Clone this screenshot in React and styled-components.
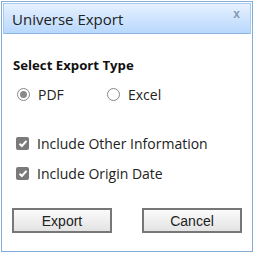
import React from "react"
import styled, { createGlobalStyle } from "styled-components"

const Global = createGlobalStyle`
	html, body {
		margin: 0;
		padding: 0;
		background: #ffffff;
	}
	body {
		font-family: "Open Sans", "Noto Sans", sans-serif;
	}
`

const Page = styled.div`
	width: 254px;
	height: 254px;
	padding: 1px;
	box-sizing: border-box;
`

const Dialog = styled.div`
	width: 252px;
	height: 251px;
	box-sizing: border-box;
	border: 1px solid #85acd6;
	padding: 1px;
	display: flex;
	flex-direction: column;
	background: #fff;
`

const Header = styled.div`
	height: 31px;
	box-sizing: border-box;
	border: 1px solid #a9cbef;
	border-bottom-color: #8db6e3;
	background: linear-gradient(#e6f1ff, #b8d8fd);
	display: flex;
	align-items: center;
	justify-content: space-between;
	padding: 0 10px 0 8px;
`

const Title = styled.span`
	font-size: 15px;
	color: #222;
	margin-top: 1px;
`

const Close = styled.span`
	font-family: "Liberation Sans", Arial, sans-serif;
	font-weight: bold;
	font-size: 12px;
	color: #8799ae;
	margin-top: -9px;
`

const Body = styled.div`
	padding: 22px 10px 0 10px;
	display: flex;
	flex-direction: column;
`

const Heading = styled.div`
	font-size: 13.2px;
	font-weight: bold;
	color: #111;
	line-height: 18px;
`

const RadioRow = styled.div`
	display: flex;
	margin-top: 10px;
	height: 20px;
	align-items: center;
`

const Option = styled.label`
	display: flex;
	align-items: center;
	width: ${p => p.w}px;
	font-size: 14px;
	color: #222;
`

const Radio = styled.span`
	width: 11px;
	height: 11px;
	border-radius: 50%;
	border: 1px solid #888;
	background: #fff;
	margin: 0 8px 0 4px;
	display: flex;
	align-items: center;
	justify-content: center;
	&::after {
		content: "";
		width: 7px;
		height: 7px;
		border-radius: 50%;
		background: ${p => (p.checked ? "#8a8a8a" : "transparent")};
	}
`

const Checks = styled.div`
	margin-top: 29px;
	display: flex;
	flex-direction: column;
	gap: 10px;
`

const CheckRow = styled.label`
	display: flex;
	align-items: center;
	height: 20px;
	font-size: 14px;
	color: #222;
`

const Box = styled.span`
	width: 13px;
	height: 13px;
	border-radius: 2px;
	background: #7a7a7a;
	margin: 0 8px 0 3px;
	display: flex;
	align-items: center;
	justify-content: center;
`

const Buttons = styled.div`
	display: flex;
	justify-content: space-between;
	margin: 25px 0 0 -1px;
	width: 230px;
`

const Button = styled.button`
	width: 100px;
	height: 25px;
	box-sizing: border-box;
	border: 2px solid #777;
	background: linear-gradient(#fbfbfb, #e3e3e3);
	font-family: "Liberation Sans", Arial, sans-serif;
	font-size: 14px;
	color: #222;
	padding: 0;
`

const Check = () => (
	<svg width="10" height="9" viewBox="0 0 10 9">
		<path d="M1.5 4.8 L3.9 7 L8.5 1.8" fill="none" stroke="#fff" strokeWidth="2" />
	</svg>
)

export default function App() {
	return (
		<Page>
			<Global />
			<Dialog>
				<Header>
					<Title>Universe Export</Title>
					<Close>x</Close>
				</Header>
				<Body>
					<Heading>Select Export Type</Heading>
					<RadioRow>
						<Option w={90}>
							<Radio checked />
							PDF
						</Option>
						<Option w={90}>
							<Radio />
							Excel
						</Option>
					</RadioRow>
					<Checks>
						<CheckRow>
							<Box><Check /></Box>
							Include Other Information
						</CheckRow>
						<CheckRow>
							<Box><Check /></Box>
							Include Origin Date
						</CheckRow>
					</Checks>
					<Buttons>
						<Button>Export</Button>
						<Button>Cancel</Button>
					</Buttons>
				</Body>
			</Dialog>
		</Page>
	)
}
